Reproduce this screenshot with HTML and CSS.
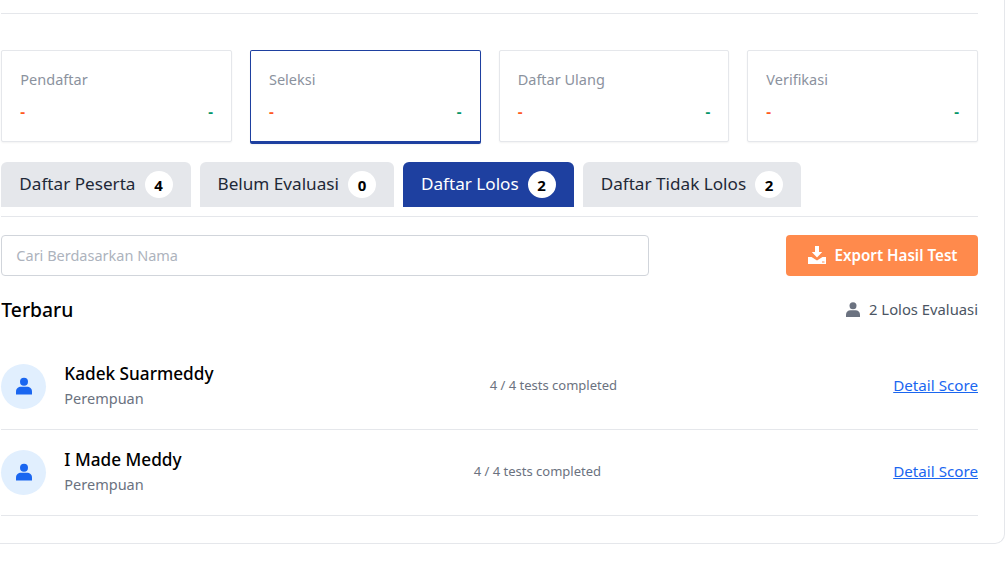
FILE: index.html
```html
<!DOCTYPE html>
<html lang="en">
<head>
  <meta charset="UTF-8" />
  <title>Seleksi</title>
  <link rel="stylesheet" href="styles.css">
</head>
<body>
<div class="panel">
  <div class="inner">
    <div class="stats">
      <div class="stat">
        <div class="stat-title">Pendaftar</div>
        <div class="stat-vals"><span class="down">-</span><span class="up">-</span></div>
      </div>
      <div class="stat active">
        <div class="stat-title">Seleksi</div>
        <div class="stat-vals"><span class="down">-</span><span class="up">-</span></div>
      </div>
      <div class="stat">
        <div class="stat-title">Daftar Ulang</div>
        <div class="stat-vals"><span class="down">-</span><span class="up">-</span></div>
      </div>
      <div class="stat">
        <div class="stat-title">Verifikasi</div>
        <div class="stat-vals"><span class="down">-</span><span class="up">-</span></div>
      </div>
    </div>

    <div class="tabs">
      <div class="tab">Daftar Peserta <span class="count">4</span></div>
      <div class="tab">Belum Evaluasi <span class="count">0</span></div>
      <div class="tab current">Daftar Lolos <span class="count">2</span></div>
      <div class="tab">Daftar Tidak Lolos <span class="count">2</span></div>
    </div>

    <div class="tools">
      <input class="search" type="text" placeholder="Cari Berdasarkan Nama" />
      <button class="export">
        <svg width="18" height="18" viewBox="0 0 18 18"><path fill="#fff" d="M7 0h4v6h3.200L9 11.600 3.800 6H7z"/><path fill="#fff" fill-rule="evenodd" d="M0 11h3.500L9 14.500 14.500 11H18v7H0zm14 4.500v1h2.500v-1z"/></svg>
        Export Hasil Test
      </button>
    </div>

    <div class="list-head">
      <h3>Terbaru</h3>
      <div class="passed">
        <svg width="14" height="15" viewBox="0 0 14 15"><circle cx="7" cy="3.700" r="3.500" fill="#6b7280"/><path fill="#6b7280" d="M0 15v-2.500C0 9.800 2 8.200 4.500 8.200h5c2.500 0 4.500 1.600 4.500 4.300V15z"/></svg>
        2 Lolos Evaluasi
      </div>
    </div>

    <div class="person">
      <div class="who">
        <div class="avatar"><svg width="16" height="18" viewBox="0 0 14 15"><circle cx="7" cy="3.700" r="3.500" fill="#1a66f0"/><path fill="#1a66f0" d="M0 15v-2.500C0 9.800 2 8.200 4.500 8.200h5c2.500 0 4.500 1.600 4.500 4.300V15z"/></svg></div>
        <div>
          <div class="name">Kadek Suarmeddy</div>
          <div class="gender">Perempuan</div>
        </div>
      </div>
      <div class="progress">4 / 4 tests completed</div>
      <a class="detail" href="#">Detail Score</a>
    </div>
    <div class="person">
      <div class="who">
        <div class="avatar"><svg width="16" height="18" viewBox="0 0 14 15"><circle cx="7" cy="3.700" r="3.500" fill="#1a66f0"/><path fill="#1a66f0" d="M0 15v-2.500C0 9.800 2 8.200 4.500 8.200h5c2.500 0 4.500 1.600 4.500 4.300V15z"/></svg></div>
        <div>
          <div class="name">I Made Meddy</div>
          <div class="gender">Perempuan</div>
        </div>
      </div>
      <div class="progress">4 / 4 tests completed</div>
      <a class="detail" href="#">Detail Score</a>
    </div>
  </div>
</div>
</body>
</html>
```

FILE: styles.css
```css
html,body{margin:0;padding:0;background:#fff;font-family:'Noto Sans',sans-serif;color:#111827;}
.panel{height:544px;box-sizing:border-box;border-right:1px solid #e5e7eb;border-bottom:1px solid #e5e7eb;border-bottom-right-radius:10px;padding:13px 26px 0 1.330px;}
.inner{border-top:1px solid #e5e7eb;padding-top:36px;}

.stats{display:grid;grid-template-columns:repeat(4,1fr);gap:18px;align-items:start;}
.stat{box-sizing:border-box;height:92px;background:#fff;border:1px solid #e5e7eb;border-radius:2px;box-shadow:0 1px 2px rgba(0,0,0,.05);padding:18px 18px 0;}
.stat.active{height:94px;border-color:#1e40a0;border-bottom-width:3px;}
.stat-title{font-size:14.500px;line-height:20px;color:#8b929e;}
.stat-vals{display:flex;justify-content:space-between;margin-top:12px;font-size:15px;line-height:20px;font-weight:700;}
.down{color:#ff5a1f;}
.up{color:#059669;}

.tabs{display:flex;gap:9px;margin-top:18px;padding-bottom:9px;border-bottom:1px solid #e5e7eb;}
.tab{display:flex;align-items:center;gap:9px;height:45px;box-sizing:border-box;padding:0 18px 2px;background:#e5e7eb;border-radius:6px 6px 0 0;font-size:17.150px;color:#1f2937;}
.tab.current{background:#1e40a0;color:#fff;}
.count{display:flex;align-items:center;justify-content:center;width:28px;height:27px;margin-top:2px;border-radius:50%;background:#fff;color:#000;font-size:15px;font-weight:700;}

.tools{display:flex;justify-content:space-between;margin-top:18px;}
.search{box-sizing:border-box;width:648px;height:41px;padding:0 14px 2px;border:1px solid #d1d5db;border-radius:4px;font-family:inherit;font-size:14.500px;}
.search::placeholder{color:#adb3bd;}
.export{display:flex;align-items:center;justify-content:center;gap:8px;width:192px;height:41px;padding:0 0 2px 2px;border:none;border-radius:4px;background:#ff8a4c;color:#fff;font-family:inherit;font-size:15.200px;font-weight:600;}

.list-head{display:flex;justify-content:space-between;align-items:center;margin:20px 0 19.500px;height:28px;}
.list-head h3{margin:0;font-size:19.300px;line-height:26px;font-weight:500;color:#000;}
.passed{display:flex;align-items:center;gap:9px;font-size:14.800px;color:#4b5563;margin-top:-2px;}

.person{display:flex;justify-content:space-between;align-items:center;height:85.250px;border-bottom:1px solid #e5e7eb;}
.who{display:flex;align-items:center;gap:18px;}
.avatar{display:flex;align-items:center;justify-content:center;width:45px;height:45px;border-radius:50%;background:#e1effe;}
.name{font-size:17.200px;line-height:24px;font-weight:500;color:#000;}
.gender{font-size:14.500px;line-height:24px;color:#6b7280;}
.progress{font-size:13px;color:#6b7280;margin-bottom:2px;}
.detail{font-size:15.200px;color:#1a66f0;margin-bottom:3px;}
```
